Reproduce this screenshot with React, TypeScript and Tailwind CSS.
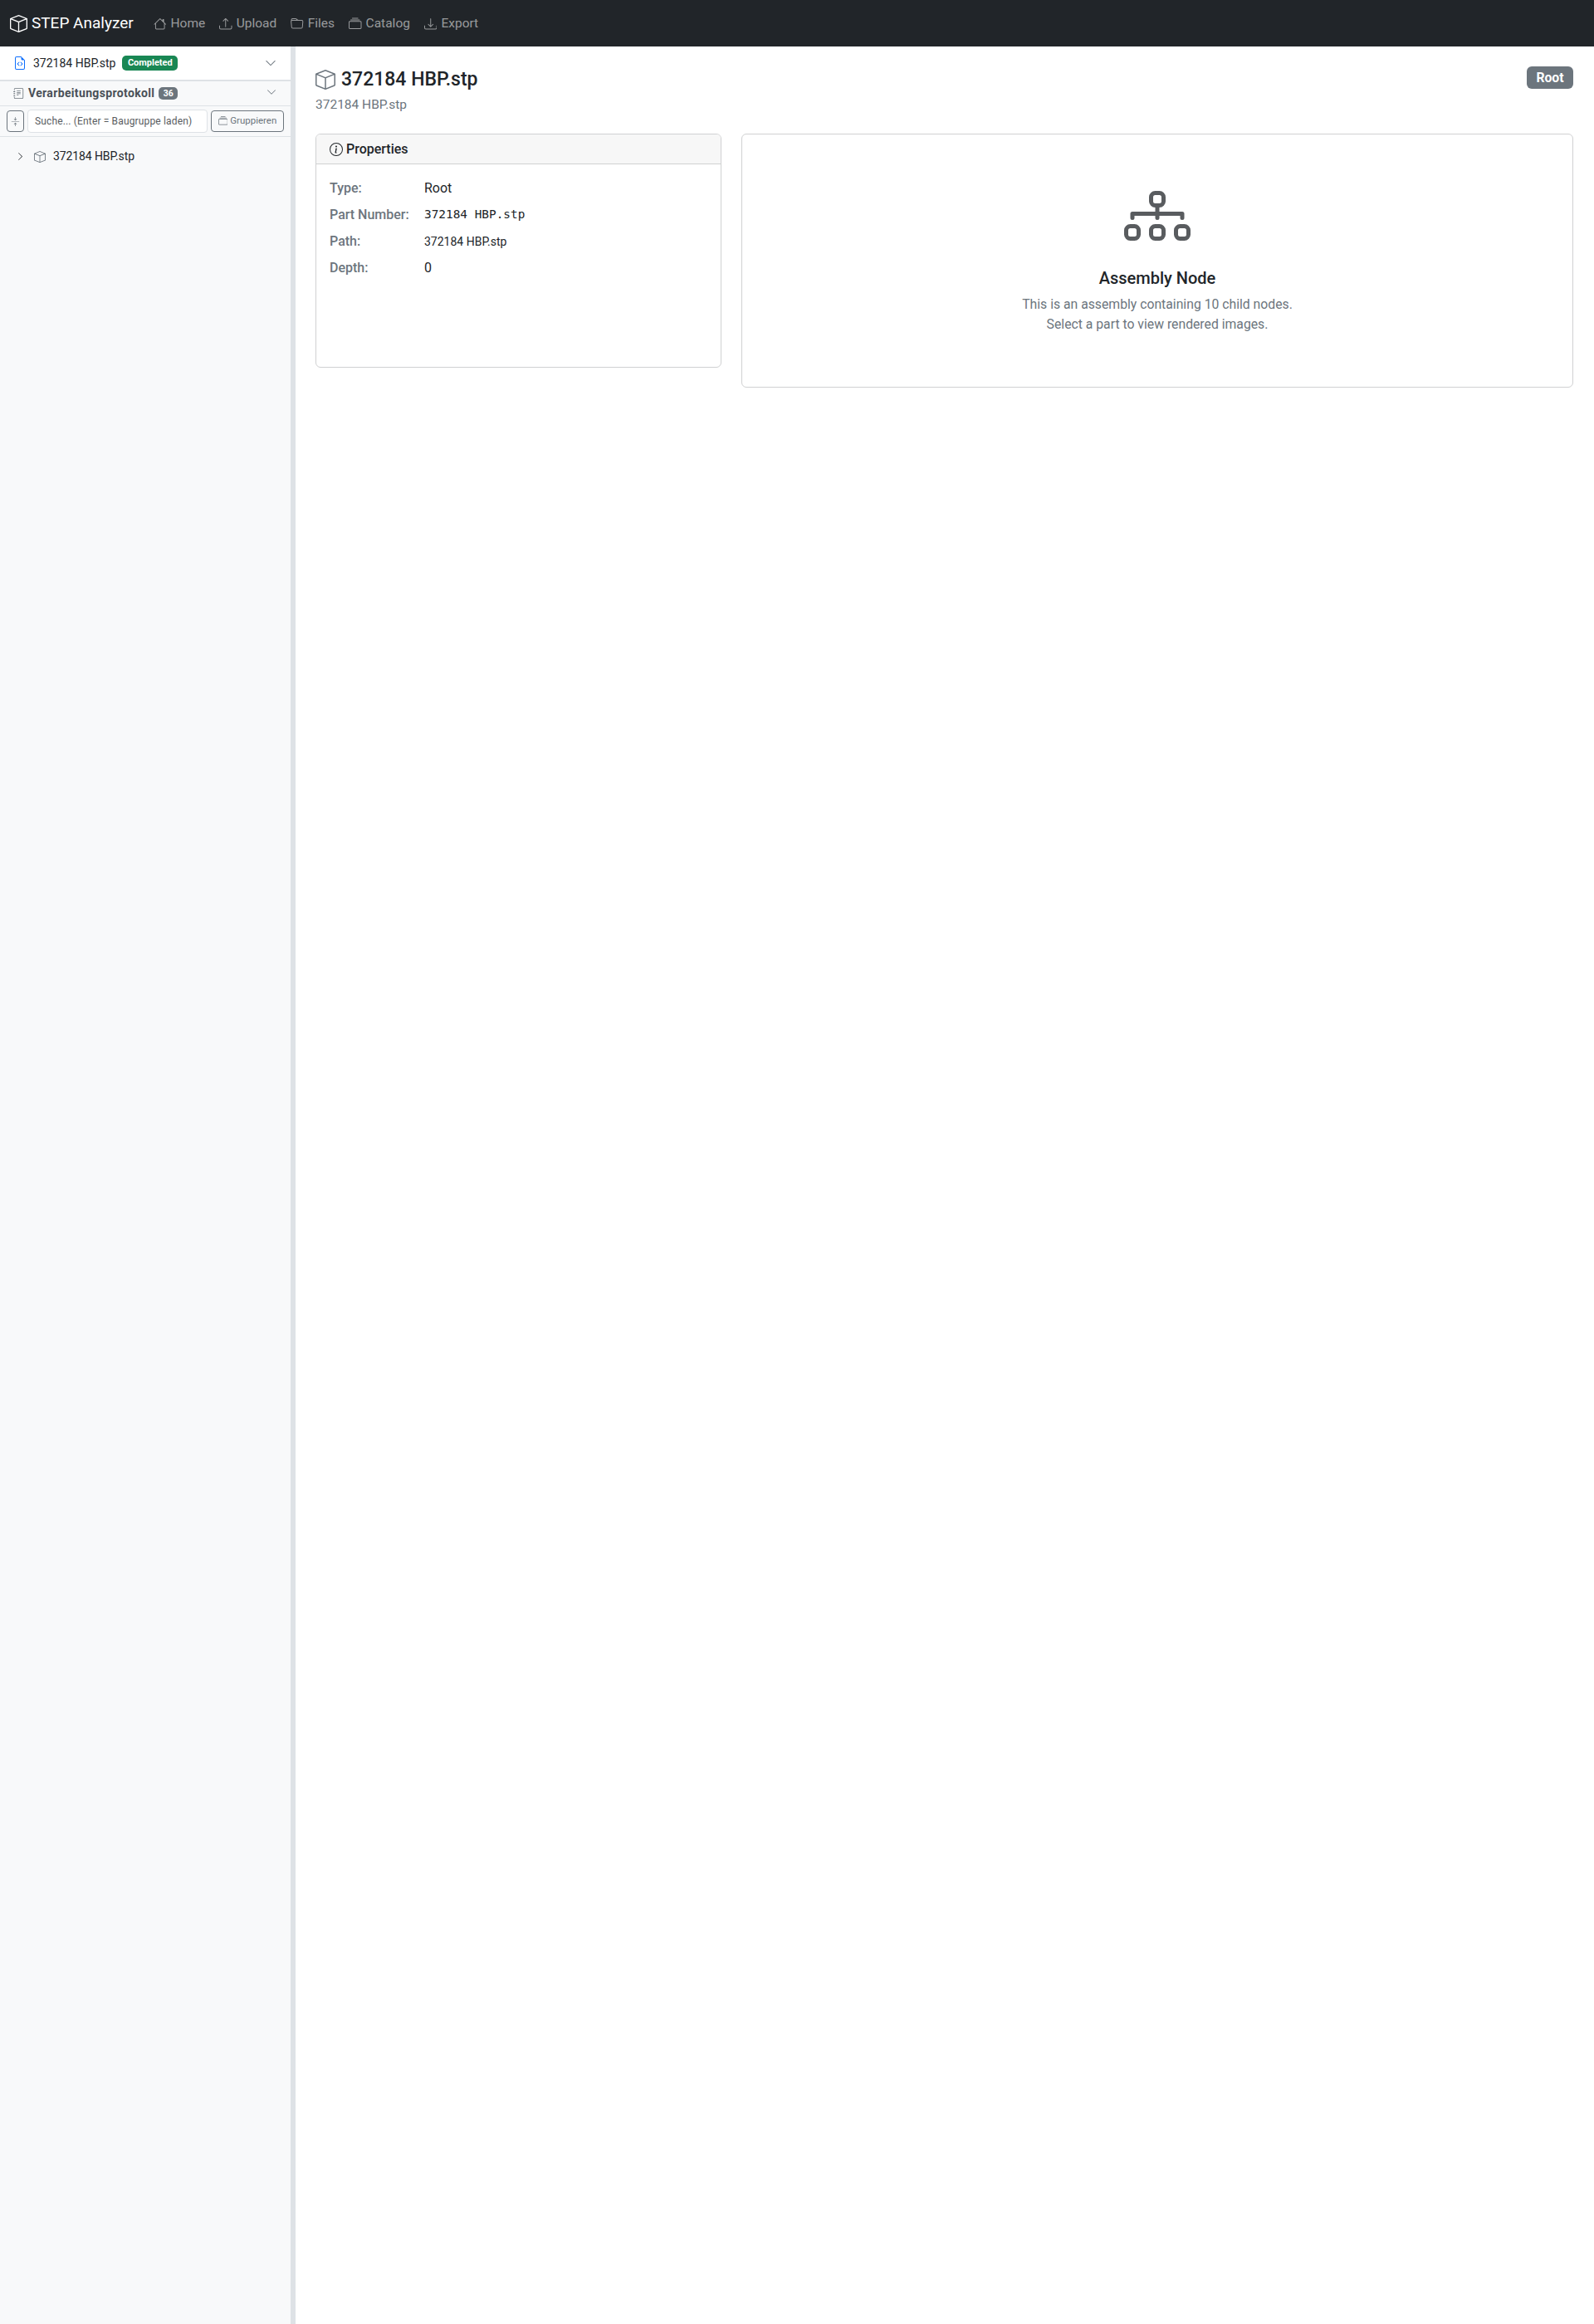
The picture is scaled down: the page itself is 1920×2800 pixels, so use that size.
import React from "react";
import {
  BsArrowsCollapse,
  BsBox,
  BsChevronDown,
  BsChevronRight,
  BsCollection,
  BsDiagram3,
  BsDownload,
  BsFileEarmarkCode,
  BsFolder,
  BsHouse,
  BsInfoCircle,
  BsJournalText,
  BsUpload,
} from "react-icons/bs";

const navItems = [
  { label: "Home", icon: <BsHouse /> },
  { label: "Upload", icon: <BsUpload /> },
  { label: "Files", icon: <BsFolder /> },
  { label: "Catalog", icon: <BsCollection /> },
  { label: "Export", icon: <BsDownload /> },
];

const props = [
  { label: "Type:", value: "Root", cls: "text-[16px]" },
  { label: "Part Number:", value: "372184 HBP.stp", cls: "text-[14.4px] font-['DejaVu_Sans_Mono',monospace]" },
  { label: "Path:", value: "372184 HBP.stp", cls: "text-[14px]" },
  { label: "Depth:", value: "0", cls: "text-[16px]" },
];

const Navbar: React.FC = () => (
  <nav className="h-[56px] shrink-0 bg-[#212529] flex items-center pl-[12px]">
    <div className="flex items-center gap-[5px] text-white text-[19px] w-[173px]">
      <BsBox className="text-[21px]" />
      <span>STEP Analyzer</span>
    </div>
    <div className="flex items-center gap-[17px] text-[15.5px] text-[#ffffff8c] mt-[1px]">
      {navItems.map((item) => (
        <div key={item.label} className="flex items-center gap-[5px]">
          {item.icon}
          <span>{item.label}</span>
        </div>
      ))}
    </div>
  </nav>
);

const Sidebar: React.FC = () => (
  <aside className="w-[356px] shrink-0 bg-[#f8f9fa] border-r-[6px] border-[#dee2e6] flex flex-col">
    <div className="h-[42px] bg-white border-b-2 border-[#dee2e6] flex items-center pl-[16px] pr-[17px]">
      <BsFileEarmarkCode className="text-[#0d6efd] text-[16px] mr-[8px]" />
      <span className="text-[14px] text-[#212529]">372184 HBP.stp</span>
      <span className="ml-[8px] bg-[#198754] text-white text-[11px] font-bold rounded-[5px] px-[6.5px] h-[18px] flex items-center">
        Completed
      </span>
      <BsChevronDown className="ml-auto text-[14px] text-[#6c757d]" />
    </div>
    <div className="h-[30px] border-b border-[#dee2e6] flex items-center pl-[16px] pr-[17px]">
      <BsJournalText className="text-[13px] text-[#6c757d] mr-[5px]" />
      <span className="text-[14px] font-bold tracking-[0.35px] text-[#495057]">Verarbeitungsprotokoll</span>
      <span className="ml-[5px] bg-[#6c757d] text-white text-[10.5px] font-bold rounded-[5px] px-[5.5px] h-[15px] flex items-center">
        36
      </span>
      <BsChevronDown className="ml-auto text-[12px] text-[#6c757d] -mt-[3px]" />
    </div>
    <div className="h-[37px] border-b border-[#dee2e6] flex items-center pl-[8px] pr-[8px] gap-[4px]">
      <button className="w-[21px] h-[26px] shrink-0 border border-[#6c757d] rounded-[4px] flex items-center justify-center text-[#6c757d] text-[11px]">
        <BsArrowsCollapse />
      </button>
      <div className="w-[217px] shrink-0 h-[28px] bg-white border border-[#dee2e6] rounded-[4px] flex items-center pl-[8px] text-[12px] tracking-[0.15px] text-[#595c5f] whitespace-nowrap">
        Suche... (Enter = Baugruppe laden)
      </div>
      <button className="flex-1 h-[26px] border border-[#6c757d] rounded-[4px] flex items-center justify-center gap-[3px] text-[#6c757d] text-[11.5px]">
        <BsCollection />
        <span>Gruppieren</span>
      </button>
    </div>
    <div className="flex items-center pl-[19px] pt-[13px] text-[14px] text-[#212529]">
      <BsChevronRight className="text-[11px] mr-[11px]" />
      <BsBox className="text-[14px] text-[#6c757d] mr-[9px]" />
      <span className="tracking-[-0.1px]">372184 HBP.stp</span>
    </div>
  </aside>
);

const Main: React.FC = () => (
  <main className="flex-1 pl-[24px] pr-[25px] pt-[24px]">
    <div className="flex items-start justify-between h-[81px]">
      <div>
        <h1 className="flex items-center text-[23px] font-medium leading-[29px] mt-[1px] text-[#212529]">
          <BsBox className="text-[24px] text-[#6c757d] mr-[7px]" />
          372184 HBP.stp
        </h1>
        <p className="text-[15.5px] text-[#6c757d] mt-[4px] leading-[24px]">372184 HBP.stp</p>
      </div>
      <span className="bg-[#6c757d] text-white text-[15.75px] font-bold rounded-[6px] w-[56px] h-[27px] flex items-center justify-center">
        Root
      </span>
    </div>
    <div className="grid grid-cols-[489px_1fr] gap-[24px] items-start">
      <section className="h-[282px] border border-[#d0d1d2] rounded-[6px] overflow-hidden">
        <div className="h-[36px] bg-[#f7f7f7] border-b border-[#d0d1d2] flex items-center pl-[16px] gap-[4px] text-[16px] font-medium text-[#212529]">
          <BsInfoCircle className="text-[16px]" />
          Properties
        </div>
        <div className="pl-[16px] pt-[17px] flex flex-col gap-[8px]">
          {props.map((row) => (
            <div key={row.label} className="flex items-center h-[24px]">
              <span className="w-[114px] text-[16px] font-medium text-[#6c757d]">{row.label}</span>
              <span className={row.cls + " text-[#212529]"}>{row.value}</span>
            </div>
          ))}
        </div>
      </section>
      <section className="h-[306px] border border-[#d0d1d2] rounded-[6px] flex flex-col items-center pt-[58px]">
        <BsDiagram3 className="text-[80px] text-[#595c5f]" />
        <h5 className="text-[20px] font-medium text-[#212529] mt-[23px] leading-[24px]">Assembly Node</h5>
        <p className="text-[15.75px] text-[#6c757d] mt-[8px] leading-[24px] text-center">
          This is an assembly containing 10 child nodes.
          <br />
          Select a part to view rendered images.
        </p>
      </section>
    </div>
  </main>
);

export default function App() {
  return (
    <div className="h-[2800px] flex flex-col bg-white font-['Roboto','Liberation_Sans',sans-serif]">
      <Navbar />
      <div className="flex-1 flex">
        <Sidebar />
        <Main />
      </div>
    </div>
  );
}
